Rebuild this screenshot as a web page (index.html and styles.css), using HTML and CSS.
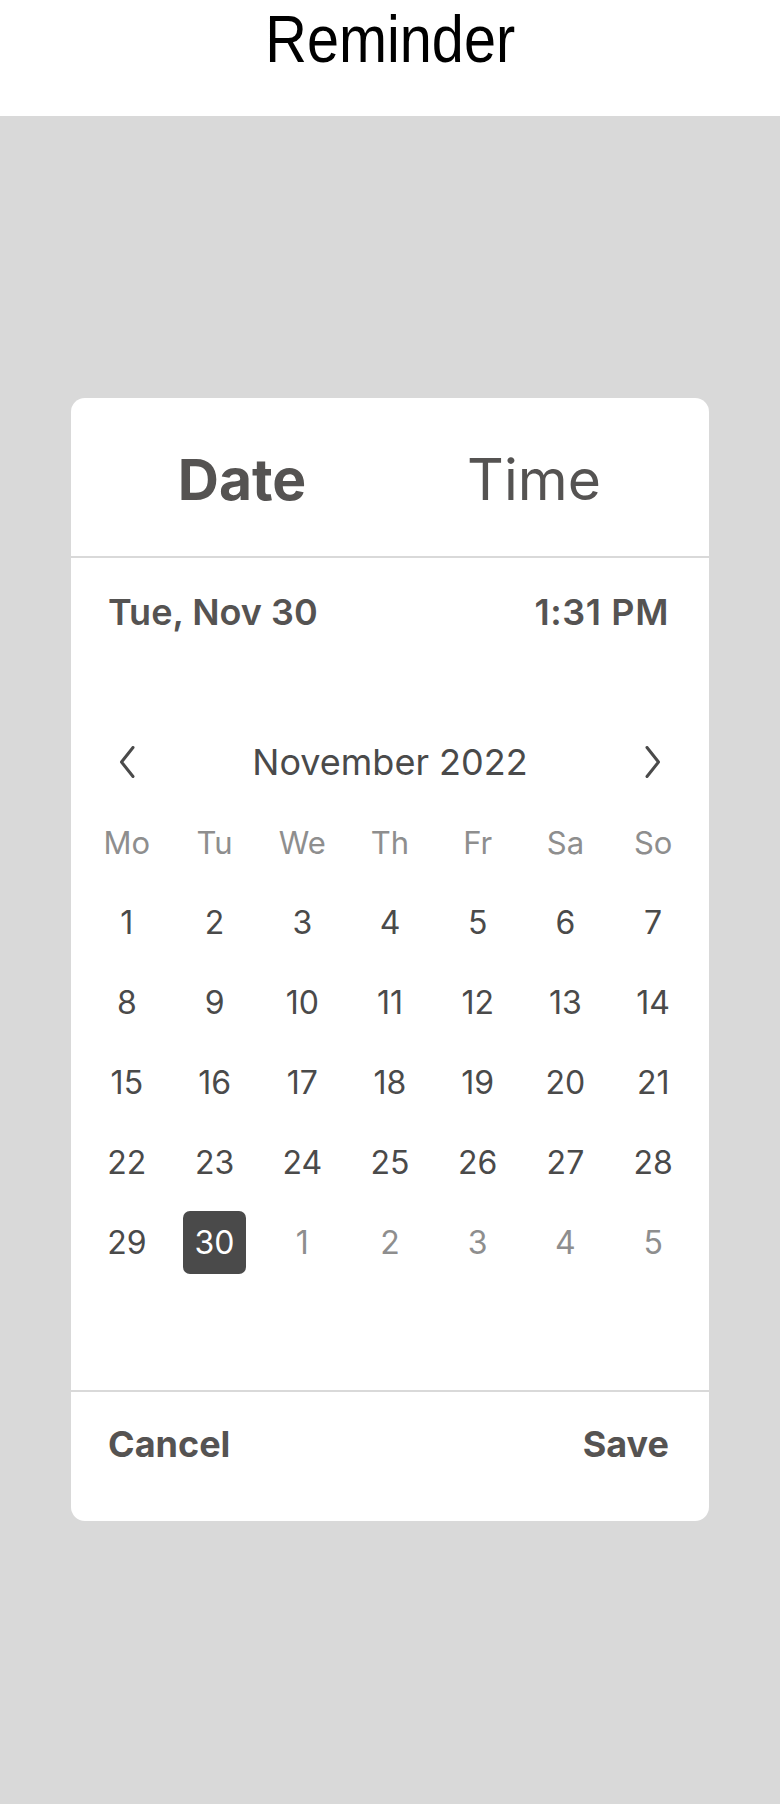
FILE: index.html
```html
<!DOCTYPE html>
<html lang="en">
<head>
<meta charset="utf-8">
<title>Reminder</title>
<link rel="stylesheet" href="styles.css">
</head>
<body>
<header class="app-header">
  <h1 class="app-title">Reminder</h1>
</header>
<main class="page">
  <section class="picker">
    <div class="tabs">
      <div class="tab tab-active">Date</div>
      <div class="tab">Time</div>
    </div>
    <div class="summary">
      <span>Tue, Nov 30</span>
      <span class="summary-time">1:31 PM</span>
    </div>
    <div class="calendar">
      <div class="nav">
        <button class="nav-btn" aria-label="Previous month">
          <svg width="16" height="32" viewBox="0 0 16 32"><path d="M14 1.5 L2.5 16 L14 30.5" fill="none" stroke="#4a4a4a" stroke-width="3" stroke-linecap="round" stroke-linejoin="round"/></svg>
        </button>
        <div class="month">November 2022</div>
        <button class="nav-btn" aria-label="Next month">
          <svg width="16" height="32" viewBox="0 0 16 32"><path d="M2 1.5 L13.5 16 L2 30.5" fill="none" stroke="#4a4a4a" stroke-width="3" stroke-linecap="round" stroke-linejoin="round"/></svg>
        </button>
      </div>
      <div class="grid weekdays">
        <div>Mo</div><div>Tu</div><div>We</div><div>Th</div><div>Fr</div><div>Sa</div><div>So</div>
      </div>
      <div class="grid days">
        <div class="day">1</div><div class="day">2</div><div class="day">3</div><div class="day">4</div><div class="day">5</div><div class="day">6</div><div class="day">7</div>
        <div class="day">8</div><div class="day">9</div><div class="day">10</div><div class="day">11</div><div class="day">12</div><div class="day">13</div><div class="day">14</div>
        <div class="day">15</div><div class="day">16</div><div class="day">17</div><div class="day">18</div><div class="day">19</div><div class="day">20</div><div class="day">21</div>
        <div class="day">22</div><div class="day">23</div><div class="day">24</div><div class="day">25</div><div class="day">26</div><div class="day">27</div><div class="day">28</div>
        <div class="day">29</div><div class="day"><span class="selected">30</span></div><div class="day muted">1</div><div class="day muted">2</div><div class="day muted">3</div><div class="day muted">4</div><div class="day muted">5</div>
      </div>
    </div>
    <div class="footer">
      <button class="action">Cancel</button>
      <button class="action">Save</button>
    </div>
  </section>
</main>
</body>
</html>
```

FILE: styles.css
```css
html, body {
  margin: 0;
  padding: 0;
}
body {
  background: #d9d9d9;
  font-family: Inter, "Noto Sans", "Liberation Sans", sans-serif;
  color: #545454;
  min-height: 1804px;
}
.app-header {
  background: #ffffff;
  height: 116px;
  display: flex;
  justify-content: center;
  align-items: flex-start;
}
.app-title {
  margin: 0;
  font-family: "Liberation Sans", Arial, sans-serif;
  font-weight: 400;
  font-size: 67px;
  line-height: normal;
  color: #000;
  transform: scaleX(0.86);
}
.page {
  padding-top: 282px;
}
.picker {
  width: 638px;
  margin: 0 auto;
  background: #ffffff;
  border-radius: 14px;
  overflow: hidden;
}
.tabs {
  height: 160px;
  padding: 4px 29px 0 25px;
  box-sizing: border-box;
  display: grid;
  grid-template-columns: 1fr 1fr;
  align-items: center;
  text-align: center;
  border-bottom: 2px solid #d9d9d9;
}
.tab {
  font-size: 57px;
  line-height: 1;
  font-weight: 400;
  color: #555352;
}
.tab-active {
  font-weight: 700;
}
.summary {
  height: 102px;
  padding: 5px 40px 0 37px;
  box-sizing: border-box;
  display: flex;
  justify-content: space-between;
  align-items: center;
  font-size: 36px;
  line-height: 1;
  font-weight: 600;
  color: #555352;
}
.summary-time {
  letter-spacing: 0.6px;
}
.calendar {
  padding: 62px 12px 0;
}
.nav {
  display: grid;
  grid-template-columns: repeat(7, 1fr);
  height: 80px;
  align-items: center;
}
.nav-btn {
  border: 0;
  background: none;
  padding: 0;
  display: flex;
  justify-content: center;
  align-items: center;
  height: 80px;
}
.month {
  grid-column: 2 / 7;
  text-align: center;
  font-size: 36px;
  line-height: 1;
  color: #4a4a4a;
}
.grid {
  display: grid;
  grid-template-columns: repeat(7, 1fr);
  grid-auto-rows: 80px;
  align-items: center;
  text-align: center;
}
.weekdays {
  font-size: 31px;
  color: #8e8e8e;
}
.day {
  font-size: 32px;
  color: #4a4a4a;
  display: flex;
  justify-content: center;
  align-items: center;
}
.muted {
  color: #8e8e8e;
}
.selected {
  width: 63px;
  height: 63px;
  border-radius: 7px;
  background: #4a4a4a;
  color: #ffffff;
  display: flex;
  justify-content: center;
  align-items: center;
}
.footer {
  margin-top: 108px;
  border-top: 2px solid #d9d9d9;
  height: 131px;
  box-sizing: border-box;
  padding: 34px 40px 0 37px;
  display: flex;
  justify-content: space-between;
  align-items: flex-start;
}
.action {
  border: 0;
  background: none;
  padding: 0;
  font-family: Inter, "Noto Sans", sans-serif;
  font-size: 36px;
  line-height: 1;
  font-weight: 700;
  color: #555352;
}
```
